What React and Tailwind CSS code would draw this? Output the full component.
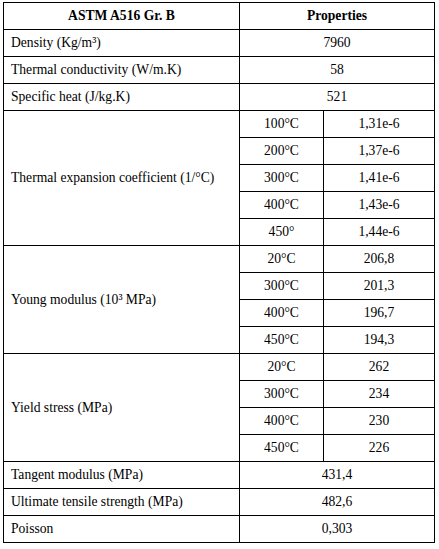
import React from 'react';

const simpleRows = [
    ['Density (Kg/m³)', '7960'],
    ['Thermal conductivity (W/m.K)', '58'],
    ['Specific heat (J/kg.K)', '521'],
];

const groups = [
    {
        label: 'Thermal expansion coefficient (1/°C)',
        rows: [
            ['100°C', '1,31e-6'],
            ['200°C', '1,37e-6'],
            ['300°C', '1,41e-6'],
            ['400°C', '1,43e-6'],
            ['450°', '1,44e-6'],
        ],
    },
    {
        label: 'Young modulus (10³ MPa)',
        rows: [
            ['20°C', '206,8'],
            ['300°C', '201,3'],
            ['400°C', '196,7'],
            ['450°C', '194,3'],
        ],
    },
    {
        label: 'Yield stress (MPa)',
        rows: [
            ['20°C', '262'],
            ['300°C', '234'],
            ['400°C', '230'],
            ['450°C', '226'],
        ],
    },
];

const bottomRows = [
    ['Tangent modulus (MPa)', '431,4'],
    ['Ultimate tensile strength (MPa)', '482,6'],
    ['Poisson', '0,303'],
];

const cell = 'border border-black px-[7px] py-0';

export default function App() {
    return (
        <div className="bg-white w-[439px] h-[549px] pt-[2px] pl-[3px]" style={{ fontFamily: '"Liberation Serif", "Times New Roman", serif' }}>
            <table className="border-collapse text-[13.6px] leading-[16px] text-black w-[431px] table-fixed">
                <colgroup>
                    <col className="w-[236px]" />
                    <col className="w-[84px]" />
                    <col className="w-[111px]" />
                </colgroup>
                <tbody>
                    <tr className="h-[27px]">
                        <th className={`${cell} text-center font-bold`}>ASTM A516 Gr. B</th>
                        <th colSpan={2} className={`${cell} text-center font-bold`}>Properties</th>
                    </tr>
                    {simpleRows.map(([label, value]) => (
                        <tr key={label} className="h-[27px]">
                            <td className={`${cell} text-left`}>{label}</td>
                            <td colSpan={2} className={`${cell} text-center`}>{value}</td>
                        </tr>
                    ))}
                    {groups.map(group =>
                        group.rows.map(([temp, value], i) => (
                            <tr key={group.label + temp} className="h-[27px]">
                                {i === 0 && (
                                    <td rowSpan={group.rows.length} className={`${cell} text-left align-middle`}>
                                        {group.label}
                                    </td>
                                )}
                                <td className={`${cell} text-center`}>{temp}</td>
                                <td className={`${cell} text-center`}>{value}</td>
                            </tr>
                        ))
                    )}
                    {bottomRows.map(([label, value]) => (
                        <tr key={label} className="h-[27px]">
                            <td className={`${cell} text-left`}>{label}</td>
                            <td colSpan={2} className={`${cell} text-center`}>{value}</td>
                        </tr>
                    ))}
                </tbody>
            </table>
        </div>
    );
}
